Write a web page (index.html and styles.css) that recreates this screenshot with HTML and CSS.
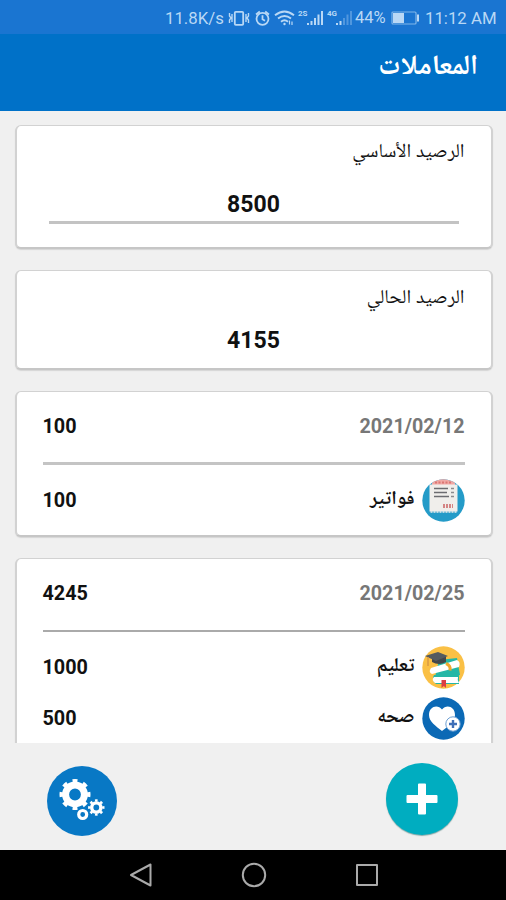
FILE: index.html
```html
<!DOCTYPE html>
<html lang="ar" dir="rtl">
<head>
<meta charset="utf-8">
<title>المعاملات</title>
<link rel="stylesheet" href="styles.css">
</head>
<body>
<div class="screen">
  <div class="status" dir="ltr">
    <span class="speed">11.8K/s</span>
    <svg class="status-icons" width="125" height="24" viewBox="0 0 125 24" fill="none" stroke="currentColor">
      <g stroke-width="1.8">
        <rect x="6.800" y="9.800" width="8.400" height="13" rx="1"/>
        <path d="M1.500 11v3l1.500 2-1.500 2v3M4 12v8M20.500 11v3l-1.500 2 1.500 2v3M18 12v8" stroke-width="1.400"/>
      </g>
      <g stroke-width="1.800">
        <circle cx="34.500" cy="16.800" r="6"/>
        <path d="M34.500 13.300v4l2.500 1.500M28 12.500l3.800-3M41 12.500l-3.800-3"/>
      </g>
      <g stroke-width="1.900">
        <path d="M47 13.200q9.500-7.500 19 0M50 16.600q6.500-5 13 0M53 19.700q3.500-2.700 7 0"/>
        <circle cx="56.500" cy="22" r="1.200" fill="currentColor" stroke="none"/>
        <path d="M61.500 18.500v4M64 19.500v3.500" stroke-width="1.200"/>
      </g>
      <path stroke-width="2" d="M80 21v2M83.500 19v4M87 16v7M90.500 12.500v10.500M94 9v14"/>
      <path stroke-width="2" d="M109 21v2M112.500 19v4"/>
      <path stroke-width="2" opacity=".35" d="M116 16v7M119.500 12.500v10.500M123 9v14"/>
      <g class="network" fill="currentColor" stroke="none"><text x="70" y="14">2S</text><text x="99" y="14">4G</text></g>
    </svg>
    <span class="percent">44%</span>
    <svg class="battery" width="29" height="14" viewBox="0 0 29 14">
      <rect x="1" y="1" width="24" height="12" rx="1" fill="none" stroke="currentColor" stroke-width="1.200" opacity=".65"/>
      <rect x="2" y="2" width="11" height="10" fill="currentColor"/>
      <path d="M27 3.500v7" stroke="currentColor" stroke-width="2"/>
    </svg>
    <span class="time">11:12 AM</span>
  </div>
  <header class="appbar"><h1>المعاملات</h1></header>
  <main class="list">
    <section class="card base">
      <h2>الرصيد الأساسي</h2>
      <div class="amount field">8500</div>
    </section>
    <section class="card current">
      <h2>الرصيد الحالي</h2>
      <div class="amount">4155</div>
    </section>
    <section class="card day">
      <div class="row head"><span class="date">2021/02/12</span><span>100</span></div>
      <div class="row item">
        <span class="category">
          <svg width="43" height="43" viewBox="0 0 43 43">
            <circle cx="21.500" cy="21.500" r="21.200" fill="#249bc8"/>
            <path d="M10 4Q21 -3.500 33 4v3H10z" fill="#f0a8a4"/>
            <path d="M13 3.500h17" stroke="#db7774" stroke-width="2" stroke-dasharray="2 1.500"/>
            <rect x="7.500" y="5.500" width="28" height="27" fill="#f0eeeb"/>
            <path d="M8.500 33h27" stroke="#f0eeeb" stroke-width="1.400" stroke-dasharray="2 1"/>
            <path d="M12 9.500h14M12 13.500h13M12 17.500h15" stroke="#6c6c70" stroke-width="1.500"/>
            <path d="M29 9.500h3M29 13.500h3M29 17.500h3" stroke="#8a8a8d" stroke-width="1.500"/>
            <path d="M21 27h10" stroke="#d48484" stroke-width="4" stroke-dasharray="2 1"/>
          </svg>
          <span>فواتير</span>
        </span>
        <span>100</span>
      </div>
    </section>
    <section class="card day last">
      <div class="row head"><span class="date">2021/02/25</span><span>4245</span></div>
      <div class="row item">
        <span class="category">
          <svg width="43" height="43" viewBox="0 0 43 43">
            <circle cx="21.500" cy="21.500" r="21.200" fill="#fac045"/>
            <path d="M17 14l18-2 3 17-25 2z" fill="#25b7a6"/>
            <path d="M12 29h25v9H14q-5-4-2-9z" fill="#25b7a6"/>
            <path d="M12 31h24q-1 3 1 6H13q-4-3-1-6z" fill="#fff"/>
            <path d="M9 22l26-8q4 2 2 7l-27 7q-4-2-1-6z" fill="#fff"/>
            <path d="M24 17.500q5 2 4 7" stroke="#efa92e" stroke-width="3" fill="none"/>
            <path d="M10 10v6q7 4 14 0v-6z" fill="#42474b"/>
            <path d="M3 10l13-4 10 4-12 5z" fill="#555b60"/>
            <path d="M6 11v9" stroke="#d99a45" stroke-width="1.500"/>
            <path d="M19.500 34h4.500v8l-2.200-2-2.300 2z" fill="#dc3e43"/>
          </svg>
          <span>تعليم</span>
        </span>
        <span>1000</span>
      </div>
      <div class="row item">
        <span class="category">
          <svg width="43" height="43" viewBox="0 0 43 43">
            <circle cx="21.500" cy="21.500" r="21.200" fill="#0b69b5"/>
            <path d="M20 12.500C16 7 7 9 7 18c0 7 7 11 13 16C26 29 33 25 33 18c0-9-9-11-13-5.500z" fill="#fff"/>
            <circle cx="31" cy="27" r="7.200" fill="#fff" stroke="#6d9fd3" stroke-width="1"/>
            <path d="M31 23v8M27 27h8" stroke="#3f6fb7" stroke-width="2.400"/>
          </svg>
          <span>صحه</span>
        </span>
        <span>500</span>
      </div>
    </section>
  </main>
  <footer class="actions">
    <button class="add" aria-label="إضافة">
      <svg width="32" height="32" viewBox="0 0 32 32"><path d="M13 .5h6q1 0 1 1V12h10.500q1 0 1 1v6q0 1-1 1H20v10.500q0 1-1 1h-6q-1 0-1-1V20H1.500q-1 0-1-1v-6q0-1 1-1H12V1.500q0-1 1-1z" fill="#fff"/></svg>
    </button>
    <button class="settings" aria-label="الإعدادات">
      <svg width="70" height="70" viewBox="0 0 70 70" fill="none" stroke="#fff">
        <circle cx="28" cy="28.500" r="9.400" stroke-width="7"/>
        <circle cx="28" cy="28.500" r="13.700" pathLength="80" stroke-width="3.600" stroke-dasharray="4.600 5.400" stroke-dashoffset="2.300"/>
        <circle cx="49.300" cy="41.500" r="4.600" stroke-width="3.400"/>
        <circle cx="49.300" cy="41.500" r="7" pathLength="80" stroke-width="2.400" stroke-dasharray="4.800 5.200" stroke-dashoffset="2.400"/>
        <circle cx="35.700" cy="48.500" r="4" stroke-width="3.200"/>
      </svg>
    </button>
  </footer>
  <nav class="navbar" dir="ltr">
    <svg width="24" height="26" viewBox="0 0 24 26"><path d="M21.500 2.500v21L2 13z"/></svg>
    <svg width="26" height="26" viewBox="0 0 26 26"><circle cx="13" cy="13" r="11.200"/></svg>
    <svg width="24" height="26" viewBox="0 0 24 26"><rect x="2" y="3" width="20" height="20"/></svg>
  </nav>
</div>
</body>
</html>
```
FILE: styles.css
```css
* { box-sizing: border-box; }
body {
  margin: 0;
  background: #f0f0f0;
  color: #111;
  font-family: Roboto, "Noto Naskh Arabic", "Noto Sans Arabic", "DejaVu Sans", sans-serif;
}
.screen { display: flex; flex-direction: column; width: 506px; height: 900px; overflow: hidden; }
.status {
  flex: none;
  display: flex;
  height: 34px;
  padding: 0 9px 0 165px;
  align-items: center;
  background: #1a75d1;
  color: #b9d8f5;
  font-size: 16.800px;
  line-height: 36px;
  white-space: nowrap;
}
.speed { flex: none; width: 63px; padding-top: 2px; }
.status-icons { flex: none; margin-bottom: 6px; }
.network { font-size: 8px; font-weight: 700; }
.percent { flex: none; width: 35px; margin-left: 2px; padding-top: 1px; font-size: 16.500px; }
.battery { flex: none; margin: 1px 0 0 1px; }
.time { margin-left: 5px; padding-top: 2px; }
.appbar { flex: none; height: 77px; padding: 12px 28px; background: #0071c8; color: #fff; }
h1 { margin: 0; font-size: 28px; line-height: 38px; font-weight: 700; }
.list {
  flex: none;
  display: flex;
  flex-direction: column;
  gap: 21px;
  height: 632px;
  padding: 14px 13.500px 0 14.500px;
  overflow: hidden;
}
.card {
  flex: none;
  border: 1px solid #d2d2d2;
  border-width: 1px 2px 2px;
  border-bottom-color: #c6c6c6;
  border-radius: 6px;
  background: #fff;
  padding: 0 26px;
  box-shadow: 0 1px 1px #d5d5d5;
}
.card h2 { margin: 0; font-size: 19.600px; line-height: 28px; font-weight: 400; }
.base { height: 124px; padding-top: 11px; }
.current { height: 100px; padding-top: 12px; }
.amount { text-align: center; font-size: 23px; line-height: 30px; font-weight: 700; }
.field { height: 45px; margin: 14px 6px 0; padding-top: 11px; border-bottom: 3px solid #c3c3c3; }
.current .amount { margin-top: 15px; }
.day { height: 146px; font-size: 19.800px; font-weight: 700; }
.last { height: 240px; }
.row { display: flex; align-items: center; justify-content: space-between; direction: rtl; }
.head { height: 73px; padding-bottom: 2px; border-bottom: 3px solid #c4c4c4; }
.last .head { border-bottom: 2px solid #aaa; }
.head + .item { margin-top: 14px; }
.item + .item { margin-top: 8px; }
.date { color: #777; font-size: 19.700px; }
.category { display: flex; align-items: center; gap: 7px; font-size: 19.400px; }
.category svg { display: block; }
.category span { margin-top: -2px; }
.actions { flex: none; display: flex; height: 107px; padding: 20px 48px 0 47px; justify-content: space-between; align-items: flex-start; }
button { display: flex; align-items: center; justify-content: center; padding: 0; border: 0; border-radius: 50%; }
.add { width: 72px; height: 72px; background: #00adc0; box-shadow: 0 1px 1px #8aa; }
.settings { width: 70px; height: 70px; margin-top: 3px; background: #0878c5; }
.navbar { flex: 1; display: flex; justify-content: center; align-items: center; gap: 88px; padding-left: 1px; background: #000; }
.navbar svg { fill: none; stroke: #aaa; stroke-width: 2; stroke-linejoin: round; }
```
